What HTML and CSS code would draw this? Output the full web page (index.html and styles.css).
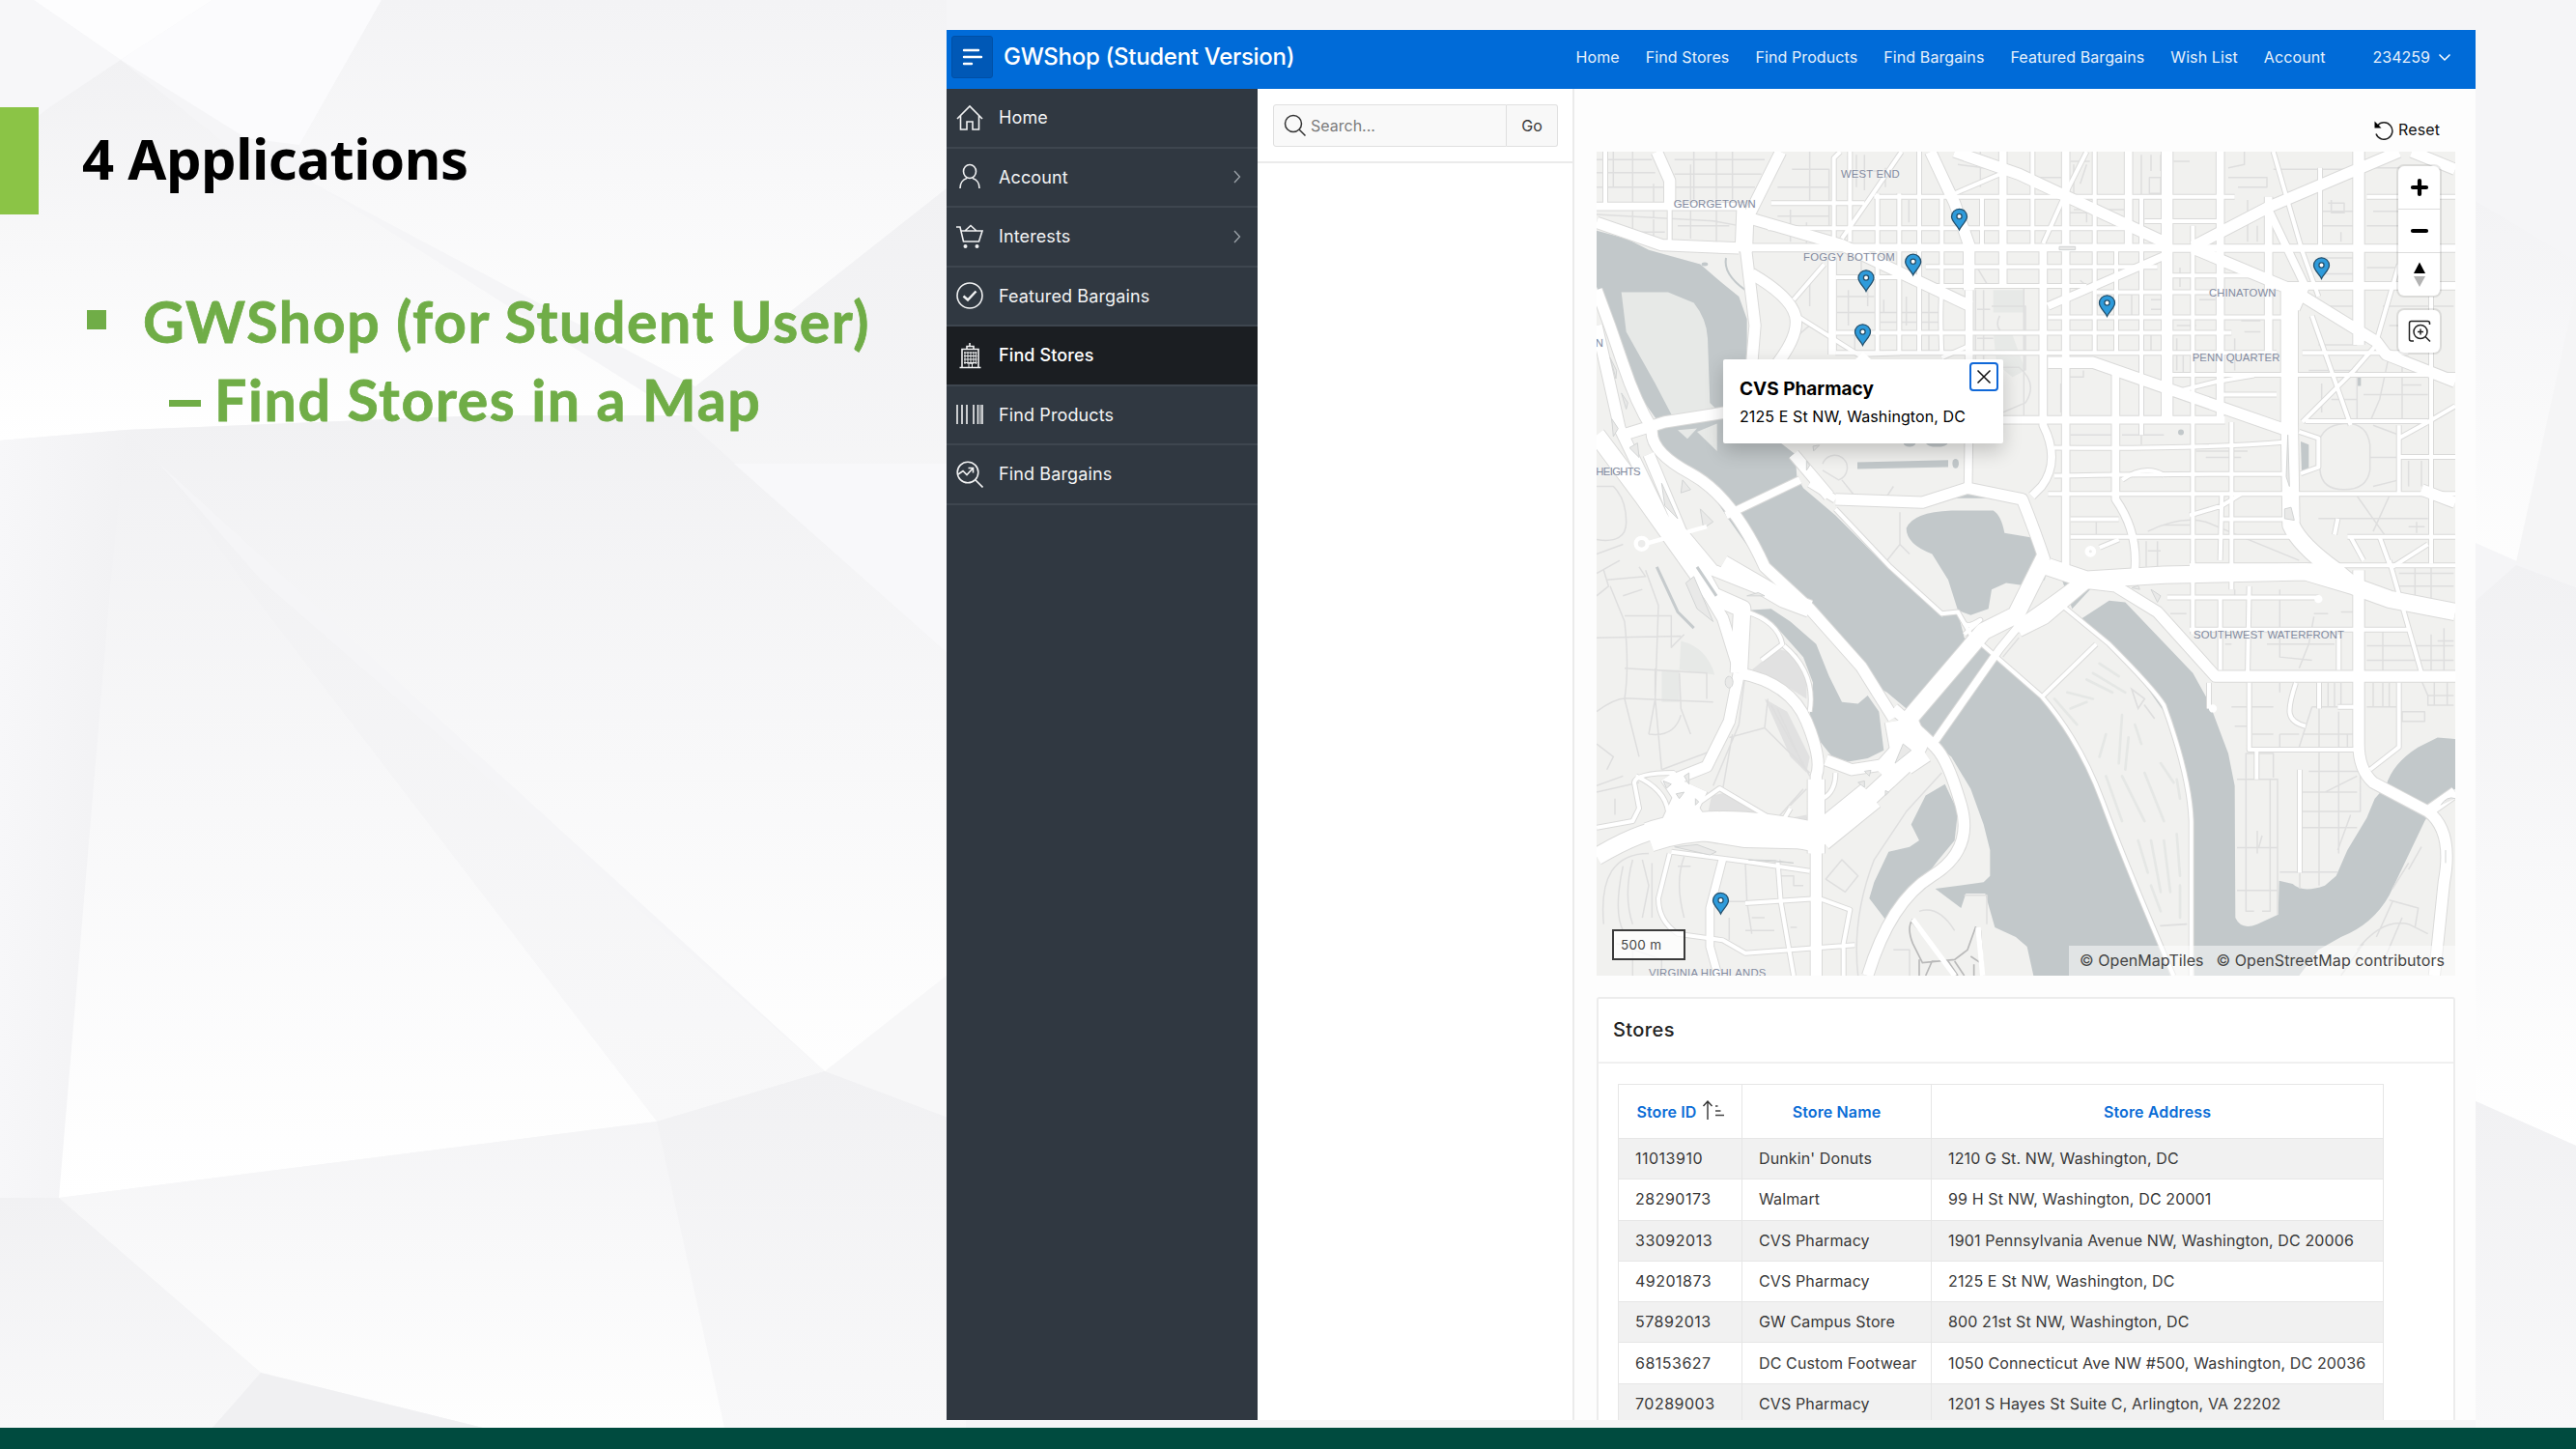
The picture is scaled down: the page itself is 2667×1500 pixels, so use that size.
FILE: index.html
```html
<!DOCTYPE html>
<html lang="en">
<head>
<meta charset="utf-8">
<title>4 Applications</title>
<link rel="stylesheet" href="styles.css">
</head>
<body>
<main class="slide">
  <svg class="backdrop" viewBox="0 0 2667 1478" preserveAspectRatio="none" aria-hidden="true">
    <defs>
      <linearGradient id="fall" x1="0" y1="0" x2="0" y2="1"><stop offset="0" stop-color="#f1f1f3"/><stop offset="1" stop-color="#fff"/></linearGradient>
      <linearGradient id="soft" x1="0" y1="0" x2="0" y2="1"><stop offset="0" stop-color="#f1f1f3"/><stop offset="1" stop-color="#f8f8f9"/></linearGradient>
      <linearGradient id="sky" x1="0" y1="0" x2="0" y2="1"><stop offset="0" stop-color="#f3f3f5"/><stop offset="1" stop-color="#fefefe"/></linearGradient>
      <linearGradient id="side" x1="0" y1="0" x2="1" y2="0"><stop offset="0" stop-color="#f7f7f9"/><stop offset="1" stop-color="#f0f0f2"/></linearGradient>
    </defs>
    <rect width="2667" height="1478" fill="#f5f5f7"/>
    <path d="M0 0H35L125 62 50 112 0 230Z" fill="#f7f7f9"/>
    <path d="M35 0H220L125 62Z" fill="#fdfdfe"/>
    <path d="M220 0H395L310 150 255 143 125 62Z" fill="#fbfbfd"/>
    <path d="M395 0H980V195L720 400 325 190 310 150Z" fill="url(#sky)"/>
    <path d="M125 62 285 190H325L705 430 500 430 130 445 0 456V150L50 112Z" fill="url(#fall)"/>
    <path d="M980 195V675L760 480 705 430 720 400Z" fill="url(#soft)"/>
    <path d="M0 456 130 445 165 480 115 600 61 1240H0Z" fill="url(#side)"/>
    <path d="M130 445 500 430H705L980 675V1157L854 1109 165 480Z" fill="url(#fall)"/>
    <path d="M760 480 980 675V480Z" fill="#f8f8fa"/>
    <path d="M980 1010V1157L854 1109Z" fill="#f7f7f8"/>
    <path d="M130 445 165 480 270 600 854 1109 680 1161 250 640Z" fill="url(#soft)"/>
    <path d="M130 445 165 480 250 600 680 1161 61 1240 115 600Z" fill="url(#fall)"/>
    <path d="M61 1240 680 1161 854 1109 1000 1164V1478H500L270 1421Z" fill="url(#sky)"/>
    <path d="M680 1161 854 1109 1000 1164V1478H750Z" fill="url(#soft)"/>
    <path d="M0 1240H61L270 1421 220 1478H0Z" fill="url(#soft)"/>
    <path d="M270 1421 500 1478H220Z" fill="#f0f0f2"/>
    <path d="M2563 208 2667 270V608L2563 562Z" fill="url(#sky)"/>
    <path d="M2667 300 2605 582 2667 608Z" fill="#f5f5f6"/>
    <path d="M2563 622 2605 585 2667 608V1186L2563 1140Z" fill="url(#fall)"/>
    <path d="M2563 1140 2667 1186V1478H2563Z" fill="url(#soft)"/>
  </svg>

  <section class="lesson">
    <header class="lesson-head"><span class="accent"></span><h1>4 Applications</h1></header>
    <ul class="topics">
      <li><span class="square"></span><span class="topic-text">GWShop (for Student User)</span></li>
      <li class="sub"><span class="dash"></span><span class="sub-text">Find Stores in a Map</span></li>
    </ul>
  </section>

  <section class="app">
    <header class="topbar">
      <button class="burger" aria-label="Menu"><svg width="22" height="18" viewBox="0 0 22 18"><path d="M2 2H17M2 9H20M2 16H10" stroke="#fff" stroke-width="2.4" stroke-linecap="round"/></svg></button>
      <span class="brand">GWShop (Student Version)</span>
      <nav class="links">
        <a>Home</a><a>Find Stores</a><a>Find Products</a><a>Find Bargains</a><a>Featured Bargains</a><a>Wish List</a><a>Account</a>
      </nav>
      <span class="user">234259<svg width="14" height="9" viewBox="0 0 14 9"><path d="M1.5 1.5 7 7 12.500 1.500" fill="none" stroke="#fff" stroke-width="1.500"/></svg></span>
    </header>

    <div class="body">
      <nav class="sidebar">
        <a class="item"><svg class="ico" viewBox="0 0 28 28"><path d="M1 15 14 2 27 15M4.500 12V26H11V18H17V26H23.500V12"/></svg>Home</a>
        <a class="item"><svg class="ico" viewBox="0 0 28 28"><ellipse cx="14" cy="8.500" rx="6.500" ry="7"/><path d="M11 15.500C6 17.500 4 20 4 26M17 15.500C22 17.500 24 20 24 26"/></svg>Account<svg class="more" viewBox="0 0 8 14"><path d="M1 1 6.500 7 1 13"/></svg></a>
        <a class="item"><svg class="ico" viewBox="0 0 28 28"><path d="M0 4H4L7.500 19H23.500L27 8H5M9 8 15 2.500 21 8"/><circle class="dot" cx="9.500" cy="24" r="2"/><circle class="dot" cx="21.500" cy="24" r="2"/></svg>Interests<svg class="more" viewBox="0 0 8 14"><path d="M1 1 6.500 7 1 13"/></svg></a>
        <a class="item"><svg class="ico" viewBox="0 0 28 28"><circle cx="14" cy="14" r="13"/><path class="bold" d="M7.500 14.500 12 18.500 20.500 9.500"/></svg>Featured Bargains</a>
        <a class="item current"><svg class="ico" viewBox="0 0 28 28"><path d="M14 1V4M11 7V4.500H18V7M6 26V7.500H23V26M3.500 26.500H25.500"/><path class="fine" d="M9 10V23M12 10V23M15 10V23M18 10V23M20.500 10V23M8 11H21.500M8 14.500H21.500M8 18H21.500M8 21.500H21.500M13 26V22H16.500V26"/></svg>Find Stores</a>
        <a class="item"><svg class="ico" viewBox="0 0 28 28"><path d="M1 4V24M6 4V24M11 4V24M18 4V24M22.500 4V24M27 4V24"/><path class="fine" d="M25 4V24"/></svg>Find Products</a>
        <a class="item"><svg class="ico" viewBox="0 0 28 28"><circle cx="12" cy="12" r="10.800"/><path d="M19.500 19.500 27.500 27.500M2 14 7 10.500 11 14.500 17 8M12.500 7.500H17.500V12.500"/></svg>Find Bargains</a>
      </nav>

      <aside class="facets">
        <div class="searchbar">
          <label class="search"><svg width="24" height="24" viewBox="0 0 24 24"><circle cx="10" cy="10" r="8.500"/><path d="M16 16 22.500 22.500"/></svg><span>Search...</span></label>
          <button class="go">Go</button>
        </div>
      </aside>

      <div class="content">
        <div class="toolbar"><button class="reset"><svg width="20" height="21" viewBox="0 0 20 21"><path d="M3.500 6A8.700 8.700 0 1 1 2 14.500" fill="none" stroke="#222" stroke-width="1.500"/><path d="M.5 1.500V8.500H7.500Z" fill="#000"/></svg>Reset</button></div>

        <div class="map">
          <svg class="tiles" viewBox="38 20 2667 2560" preserveAspectRatio="none">
            <defs>
              <g id="roads">
                <g class="w12">
                  <path d="M65 20V180M265 130V300M775 300V40L795 20M825 20V300M910 150V650M978 150V650M1040 20V650M1110 160V450Q1104 520 1110 650M1235 160V310M1392 20V310M1585 20V650M1652 320V650M1730 160V900M1810 160V650M1890 250V1320M2010 860V1380M2285 70V320M2630 470V1300M2530 870V1083"/>
                  <path d="M900 160H2020M2430 160H2705M580 180H870M570 258H1690M1740 236H1970M1060 378H1780M780 410H975M1800 405H2130M1090 437H1560M1590 457H1990M1440 535H2170M780 583H2010M780 645H2150M2230 645H2560M1800 713H2705M1980 775H2150M2240 857H2620M1460 940Q1900 945 2180 922M2530 968H2705M1460 1027Q1900 1020 2180 1022M1440 1083H2705M1510 1162H1660M1980 1162H2220M1510 1217H2230M2370 1217H2705M1880 1305H2705"/>
                  <path d="M985 20 890 160 800 290M1560 20 1490 160 1425 305M1150 150 1290 90M650 480 745 370M660 530 850 650 980 645M1110 660 1190 625M2140 20 2230 330 2280 470M2530 370 2460 610M2230 860 2390 700 2460 620M2260 530 2380 870M1820 770 1960 735 2080 715M2530 910 2620 860 2705 810M1880 1150 1980 1120 2040 1083M1975 1290 1980 1083M2340 1160 2330 1210M2470 1217 2500 1300M1600 1250 1660 1225M1670 1040Q1740 990 1800 1025M2380 1217 2420 1290M2510 1310 2620 1240M2225 1020 2280 1000V910L2220 890"/>
                  <path d="M780 1130 950 1310 1110 1455 1160 1450 1200 1520 1420 1712Q1540 1850 1610 2040T1830 2580"/>
                  <path d="M1460 1410 1630 1550Q1770 1690 1800 1740Q1880 1960 1885 2100V2580M1420 1715 1590 1550"/>
                  <path d="M1810 1405H2280M1880 1505H2560M1890 1290V1520M2065 1370 2060 1650M1975 1400V1630M2530 1670V1870L2440 1940M2500 1290 2600 1640M2065 1670V1878H2400M2088 1880V1970M1940 1670V1750M2210 1670C2180 1760 2180 1790 2240 1805M2282 1670V1750M2340 1745H2400M2222 1940V2260M2343 1520V1630"/>
                  <path d="M265 2200 230 2340Q230 2410 290 2450L430 2470 500 2510 840 2485M600 2220 610 2350 650 2580M500 2355 730 2340 825 2375 805 2480V2580M270 2195 500 2225 700 2255M360 2040 420 1998 610 2110 640 2060M160 1960Q250 2000 260 2070M38 2120 150 2100 170 2060 155 1980Q160 1950 280 1950M505 1450Q600 1480 615 1550L550 1600M620 1555Q720 1640 700 1760M780 1950Q780 2010 740 2030M1180 1485Q1190 1500 1230 1475L1180 1520"/>
                </g>
                <g class="w22">
                  <path d="M38 190H500M770 350V650M1300 20V440M1195 450V850L1192 1060M1495 20V1320M1690 20V330M2125 160V640M440 318H1800M1800 320H2705M2130 437H2705M1650 700V1100Q1720 1200 1710 1320M1425 320V870Q1480 980 1420 1060L1390 1090M1975 20V850M1190 853H1990"/>
                  <path d="M440 1150 670 1040M1440 500 1820 335M2120 190 2240 440 2210 510M700 1050 780 1100M430 2215 390 2370 390 2490 415 2580M1090 1850 1290 1565 1360 1480"/>
                </g>
                <g class="w30">
                  <path d="M225 20 265 110V185M610 20 510 220M38 240 240 310 480 320M490 220 800 310 1200 500M1075 20 1150 180 1195 310V450M1150 20 1350 90 1820 310M1890 320 2200 450 2460 610 2490 650 2705 735M1890 315 2130 190 2530 20M1810 20V860M1440 675H1580L2180 885M2405 20V620M2570 20 2705 75M2600 1070 2705 1110"/>
                  <path d="M38 450Q80 560 120 680T210 880Q200 950 330 1020T560 1310L700 1440 860 1620 960 1780M120 900 250 860 440 830M780 1100 1050 1110 1190 1065 1360 1100Q1400 1200 1430 1290M500 310 530 560 520 680M520 400Q640 470 655 530T590 690M650 960 760 1090"/>
                  <path d="M1340 1500Q1500 1390 1560 1340M1350 1510 1430 1470 1560 1360 1650 1370 1780 1450 1960 1650H2705M2405 1320V1860Q2405 1940 2450 1980L2620 2070Q2700 2130 2670 2290L2640 2580M2620 2070 2705 2010"/>
                  <path d="M38 560 110 880 240 1150 430 1470 480 1630M200 960 300 1200 420 1420 480 1440M300 1200 400 1320 600 1400M480 1640Q640 1670 690 1790T720 1960V2580M480 1640 450 1790 380 1930 280 1970M960 1750Q1050 1830 1090 1870T1170 2050T1080 2270T880 2580M750 1910 830 1940 960 1920"/>
                </g>
                <g class="w46">
                  <path d="M500 200 495 330M2190 430V860L2195 1180Q2220 1240 2330 1320L2390 1370 2500 1410 2705 1450M1440 1310 1560 1350 1800 1335 2240 1325 2390 1370M1430 1280 1340 1460 1240 1510 1010 1780M38 900 180 1090 400 1400 490 1440 480 1640M430 1300 620 1410 700 1440"/>
                  <path d="M38 2210Q190 2120 280 2120L500 2155 720 2160 850 2060 990 1930 1040 1850M260 1960 360 2110M960 1790 980 1900M720 1970 720 2200M1000 1930 1060 1890"/>
                </g>
                <path class="w80" d="M200 2150Q400 2080 720 2150M280 2120 340 1990M730 2150 890 2020M990 1790 1020 1860 930 1960"/>
              </g>
              <path id="pin-shape" d="M9 22.500C7 18 1 13.500 1 8.800A8 8 0 0 1 17 8.800C17 13.500 11 18 9 22.500Z"/>
            </defs>
            <rect x="38" y="20" width="2667" height="2560" fill="#f1f1ef"/>
            <g class="water">
              <path d="M38 265 130 290 200 325 360 370 430 430 480 470 505 540V840L590 910 655 960 660 1030 680 1065 780 1150 950 1320 1110 1465 1160 1450 1180 1530 1240 1565 1420 1715Q1530 1850 1610 2040T1820 2580H1395L1375 2490 1340 2460 1275 2430 1245 2325H1185L1170 2370 1090 2310 1240 2290 1260 2270V2190L1240 2110 1200 2000 1140 1900 1090 1860 1000 1750 940 1700 905 1680 870 1610 700 1450 560 1320 450 1165 400 1090 320 1000 240 970 195 905 230 860 180 790 90 590 75 520 38 440Z"/>
              <path d="M505 1445 580 1440 640 1480 720 1550 760 1650 800 1730 850 1735 880 1710 915 1760 930 1880 880 1905 820 1915 770 1900 730 1850 700 1770 710 1670 680 1590 600 1500Z"/>
              <path d="M1120 1985 1060 2020 1015 2110 1040 2160 1010 2180 945 2195 900 2290 885 2340 935 2405 1000 2350 1100 2220 1150 2160 1160 2070Z"/>
              <path d="M1000 1190Q1020 1140 1140 1135H1270Q1295 1150 1305 1205L1385 1218 1440 1300 1430 1350 1380 1370 1310 1360 1265 1380 1255 1440 1200 1460 1160 1445 1130 1350 1080 1270Q1000 1240 1000 1190Z"/>
              <path d="M1135 1097Q1190 1060 1255 1097ZM848 985 1130 978V1000L848 1006ZM1480 1340 1585 1365 1515 1440ZM2225 920 2250 930V1010L2228 1015ZM2402 722H2412V748H2402Z"/>
              <path d="M1545 1470 1630 1415 1680 1420 1890 1640 1940 1730 2000 1890 2020 1990 2022 2400Q2040 2440 2090 2420L2155 2390 2158 2285 2200 2295Q2230 2325 2300 2300L2335 2270 2370 2190 2430 2090 2455 2030 2490 1990Q2510 1920 2590 1870L2650 1840 2705 1845V2000L2660 2020 2610 2100 2500 2330Q2450 2420 2350 2460L2280 2500 2220 2580H1895L1885 2390 1880 2040 1830 1830 1800 1760 1730 1660 1620 1540Z"/>
              <ellipse cx="1153" cy="989" rx="10" ry="15"/><ellipse cx="374" cy="370" rx="10" ry="6"/><ellipse cx="1010" cy="927" rx="18" ry="10"/><ellipse cx="1095" cy="925" rx="34" ry="12"/><circle cx="1853" cy="892" r="9"/>
              <path d="M440 350Q430 400 500 450" fill="none" stroke="#c2c8ca" stroke-width="6"/>
            </g>
            <g class="park">
              <path d="M115 457H260L340 490Q380 540 383 600L390 800 405 815 275 845 220 740 130 580ZM290 885 350 880 320 912ZM350 890 412 865V950Z"/>
              <path d="M300 1540Q380 1560 405 1645L295 1630ZM240 1630H295V1730H240ZM1270 450H1365V520H1270ZM1270 580 1330 590 1370 700 1330 720 1280 680Z"/>
              <path class="lot" d="M520 1630 600 1565 660 1580 690 1640V1720L610 1670ZM395 2020 450 2010 620 2120 600 2145 460 2120 385 2070ZM640 2090 690 2080 700 2120 640 2140ZM560 1720 630 1760 700 1900 690 1950 640 1900Z"/>
            </g>
            <g class="lanes">
              <path d="M90 20V130M150 20V290M215 120V300M340 20V170M410 20V300M460 20V200M330 60V290M38 45H210M38 85H220M38 130H260M280 45H560M280 90H550M280 130H530M70 270H250M290 250H450M38 215 400 235 480 250M645 75H760V250M600 130H760M700 20V180M640 200V300M690 240V310M600 220H760M845 30V130M870 30V140M935 70V130M845 80H930M1008 170V240M700 430V500M640 610 700 560M820 450V560M860 340V400M880 420V500M930 480V520M1000 470V560M1070 450V640M785 470H900M785 520H1100M920 550H1100M840 590V650M1220 380 1250 430M1230 20V130M1160 60 1280 75M1350 100H1500"/>
              <path d="M1215 450V850M1240 450V700M1265 500H1370V700M1365 440V850M1220 510H1260M1220 600H1270M1240 690H1350Q1410 740 1370 800L1300 830M1290 530Q1270 570 1310 590M1200 865H1420M740 990A40 40 0 0 1 800 970 40 40 0 0 1 790 1040L740 1010M800 1040 840 1090M940 1090 960 1060M980 1140V1240L940 1290M980 1240 1010 1270M38 1060H90Q130 1100 130 1170T38 1225M38 1270 120 1240"/>
              <path d="M1520 60V150M1560 60 1540 120M1730 30V160M1760 30V80M1790 30V80M1755 100H1790V150H1755ZM1830 50H1880M2000 70 2050 60V20M2000 100H2120V130H2030M2060 170V300M2090 250V300M2140 75H2400M2310 180H2360V210H2320V170M2280 205H2400M2290 250H2400M2350 270V300M2400 350H2280M2300 400H2400M2430 70H2580M2450 205H2570M2430 250H2570M2430 380H2530M2480 500H2700M2500 560H2620M2270 500H2390M2280 620H2400M1510 50H1570M1520 200H1570M1500 210H1560V240M1590 200H1700M1540 420 1600 470M1700 460V530M1760 480H1800M1760 510H1800M1760 590V640M1850 380V440M1840 560H1900M1910 480H1960M2000 370 2100 400M2040 545H2100M2050 580H2100M2020 600V700M1840 600V700M1860 650V710M1500 720H1550V700M1480 740V830M1510 900H1640M1670 900H1800M1730 850V930"/>
              <path d="M2250 700H2400V850M2290 740V830M2320 790H2400M2420 775H2620M2500 650 2470 790 2440 860M2540 640V850M2540 745H2600M2280 930Q2290 870 2360 865T2440 930V1010Q2430 1070 2360 1070T2285 1010ZM2440 970H2530M2450 870 2530 900M2450 1060 2530 1040M2560 980V1060M2600 980V1060M2280 1160H2620M2400 1090 2490 1217M2500 1090 2450 1200M2560 1185H2610M2585 1170V1205M1590 1170V1210M1720 1230V1310M1745 1230V1310M1780 1230V1310M1800 1180H1880M1750 1260H1790M1900 950H2060M1930 970H2040M1750 1200Q1850 1150 1930 1170L2050 1220 2220 1290M2530 1330H2700M2530 1370H2700M2580 1300V1420M2630 1300V1420"/>
              <path d="M2160 1380V1590L2260 1600M2020 1380V1400M1820 1455H1870M1990 1550H2010M2120 1550H2330M2266 1465 2250 1550 2220 1625M2266 1455H2310M2350 1450H2400M2430 1555H2700M2430 1600H2700M2480 1510V1640M2630 1520V1640M2670 1500V1640M2650 1540H2700M2010 1745H2140M2020 1805H2060M2075 1830H2140M2160 1830H2220M2160 1830V1870M2160 1700V1670M2430 1745H2530M2450 1670V1745M2480 1670V1745M2500 1670V1745M2310 1670V1745M2330 1670V1745M2350 1670V1745M2260 1745H2400M2282 1745V2300M2343 1760V2200M2220 1870 2260 1745M2230 1830H2390M2370 1830V1870M2250 1945H2410V2070H2230M2230 2010H2400M2300 2010 2400 1960M2230 2120H2400M2380 2080 2340 2190M2160 2258H2340M2222 2260V2310M2540 1760H2610V1790H2540ZM2590 1640 2620 1710V1740H2700M2640 1640V1740M2680 1640V1740M2620 1710H2700"/>
              <path d="M2027 1970H2153V2390M2055 1970V2380H2080M2130 1970V2380H2105M2027 2182H2153M2027 2315H2153M2055 2000V1890H2140V1965M2090 2130V2200M2105 2145 2095 2180M2560 2230 2510 2310M2500 2345 2590 2370 2580 2430M2400 2500Q2480 2400 2560 2420L2620 2450M2510 2350 2460 2460M2350 2580 2420 2480M2540 2400 2480 2540M2600 2180 2560 2250"/>
              <path d="M38 1330 110 1290M38 1400 75 1370 60 1320M80 1370 125 1480Q140 1620 125 1720L170 1900M70 1350 190 1340 170 1310M120 1400 180 1380M190 1320 230 1430 220 1720 240 1940M125 1462H270M38 1530 300 1525M125 1625 380 1640V1720M220 1625V1710M125 1718 400 1730M38 1760Q90 1720 130 1718M310 1520 270 1560V1460M295 1640 300 1750 330 1830M220 1720 200 1830M200 1830Q280 1840 300 1770M38 1860 90 1900 70 1940M240 1940 400 1880M38 1990 120 1960M95 2030V2080M38 2010 170 1980M500 1640 480 1800 400 1990M450 1840 560 1810 700 1950M460 1830 430 2000M560 1810 570 1720M580 1740 700 1960M600 1750 680 1930M600 2090 680 2000M640 2050 690 2000"/>
              <path d="M60 2420Q40 2200 200 2200M120 2240Q90 2380 120 2440M150 2220Q120 2330 150 2420M180 2220 200 2300 180 2400M210 2230V2400M310 2210Q280 2290 310 2400M330 2240H290M500 2230 505 2350 520 2450M520 2400H560M440 2350 520 2350M610 2270H650V2300H680M640 2430H660M750 2280 800 2220 850 2270 810 2320ZM850 2580Q830 2400 900 2220L1000 2070 1110 1950M1040 2380Q1100 2360 1150 2440M960 2500H1010V2580M1180 2330H1250V2420M1300 1590 1350 1530M100 2480 240 2530V2580M150 2500V2580M450 2400V2470M500 2440H590"/>
            </g>
            <g class="greens">
              <path d="M1580 1640 1680 1700M1560 1660 1640 1700M1500 1700 1580 1720M1460 1720 1530 1800M1600 1610 1660 1650M1670 1770 1660 1920M1710 1800 1730 1860M1620 1830 1600 1900M1690 1840 1680 1940M1620 1960 1670 2100M1670 1960 1740 2100M1740 1950 1800 2100M1790 1920 1830 1980M1720 2160 1750 2260M1760 2160 1790 2320M1800 2160 1820 2320M1840 2140 1850 2270M1760 2300 1790 2380M1850 2300V2400M1840 1970 1850 2030M1510 1750 1560 1730"/>
              <path class="dark" d="M1700 1690 1740 1720 1720 1750ZM1740 1740 1770 1780M1790 2425 1870 2420"/>
            </g>
            <use href="#roads" class="edge"/>
            <use href="#roads" class="fill"/>
            <g class="isles">
              <path d="M80 660 100 700 98 725ZM115 770 135 800 130 820ZM85 850 105 880 90 905ZM140 940 165 925 170 970ZM305 1040 330 1070 300 1080ZM690 980 700 995 690 1010ZM710 935 730 932 712 950ZM240 1050 290 1160 250 1120ZM360 1130 400 1170 370 1190ZM505 1400 540 1390 560 1400ZM315 1360 340 1340 400 1480 350 1440ZM450 1650A12 18 0 1 1 449 1650M310 1960 325 1950 325 1985ZM245 1975 270 1985 255 1998ZM285 2015 310 2010 295 2030ZM345 2030 355 2040 345 2050ZM280 2180 350 2173 410 2195 390 2205ZM510 2220 590 2222 650 2230ZM990 1860 1015 1880 965 1920ZM870 1945 890 1942 885 1960ZM850 1980 870 1975 870 1995ZM935 2005 945 2010 935 2020ZM1475 315H1525V325H1475ZM1700 1375 1720 1368 1725 1380ZM1760 1380 1790 1400 1780 1420ZM2185 900 2190 1060 2180 1030ZM2175 1130 2195 1125 2205 1165 2175 1160ZM2660 2050Q2680 2020 2705 2030M2675 2190V2230"/>
              <path class="creek" d="M225 1310 290 1450 340 1500M350 1310 410 1400"/>
            </g>
            <g class="rings"><path d="M190 1238 380 1185"/><circle cx="178" cy="1238" r="18"/><circle cx="1572" cy="1262" r="11"/><circle cx="2280" cy="1410" r="6"/><circle cx="1952" cy="1750" r="6"/></g>
            <g class="runways">
              <path class="taxi" d="M1020 2405Q1000 2430 1020 2480L1050 2540 1150 2530 1190 2500 1215 2430 1230 2440 1240 2580M1040 2580V2530M1060 2580 1080 2535H1130L1160 2580M1180 2580 1150 2535M1200 2520 1230 2540M1210 2580V2545M1015 2410 1160 2580"/>
              <path class="strip" d="M1020 2405 1150 2580M1223 2430 1237 2580"/>
            </g>
            <g class="places">
              <text x="277" y="195" textLength="255">GEORGETOWN</text>
              <text x="797" y="100" textLength="182">WEST END</text>
              <text x="680" y="358" textLength="284">FOGGY BOTTOM</text>
              <text x="1940" y="471" textLength="208">CHINATOWN</text>
              <text x="1888" y="670" textLength="272">PENN QUARTER</text>
              <text x="1892" y="1534" textLength="468">SOUTHWEST WATERFRONT</text>
              <text x="36" y="1024" textLength="139">HEIGHTS</text>
              <text x="34" y="625">N</text>
              <text x="200" y="2584" textLength="364">VIRGINIA HIGHLANDS</text>
            </g>
          </svg>

          <svg class="pins" viewBox="0 0 889 853">
            <g transform="translate(366.500 58.500)"><use href="#pin-shape"/><circle cx="9" cy="8.500" r="2.600"/></g>
            <g transform="translate(318.700 105.300)"><use href="#pin-shape"/><circle cx="9" cy="8.500" r="2.600"/></g>
            <g transform="translate(270 122)"><use href="#pin-shape"/><circle cx="9" cy="8.500" r="2.600"/></g>
            <g transform="translate(266.500 178)"><use href="#pin-shape"/><circle cx="9" cy="8.500" r="2.600"/></g>
            <g transform="translate(519.500 148)"><use href="#pin-shape"/><circle cx="9" cy="8.500" r="2.600"/></g>
            <g transform="translate(741.500 109)"><use href="#pin-shape"/><circle cx="9" cy="8.500" r="2.600"/></g>
            <g transform="translate(119.500 766.500)"><use href="#pin-shape"/><circle cx="9" cy="8.500" r="2.600"/></g>
          </svg>

          <div class="popup">
            <strong>CVS Pharmacy</strong>
            <span>2125 E St NW, Washington, DC</span>
            <button class="close" aria-label="Close"><svg width="16" height="16" viewBox="0 0 16 16"><path d="M1.500 1.500 14.500 14.500M14.500 1.500 1.500 14.500" stroke="#111" stroke-width="1.500"/></svg></button>
          </div>

          <div class="controls">
            <div class="group">
              <button aria-label="Zoom in"><svg width="20" height="20" viewBox="0 0 20 20"><path d="M10 3V17M3 10H17" stroke="#000" stroke-width="4.200" stroke-linecap="round"/></svg></button>
              <button aria-label="Zoom out"><svg width="20" height="20" viewBox="0 0 20 20"><path d="M3 10H17" stroke="#000" stroke-width="4.200" stroke-linecap="round"/></svg></button>
              <button aria-label="Reset bearing"><svg width="14" height="28" viewBox="0 0 14 28"><path d="M7 1.500 13 13H1Z" fill="#000"/><path d="M7 27 13 16H1Z" fill="#b3b3b3"/></svg></button>
            </div>
            <div class="group">
              <button aria-label="Zoom to area"><svg width="24" height="24" viewBox="0 0 24 24" fill="none" stroke="#222" stroke-width="1.500"><path d="M22.500 5V3.500Q22.500 1.500 20.500 1.500H3.500Q1.500 1.500 1.500 3.500V20Q1.500 22 3.500 22H6"/><circle cx="13" cy="12.500" r="7"/><path d="M18 17.500 23 22.500M13 9.500V15.500M10 12.500H16"/></svg></button>
            </div>
          </div>

          <div class="scale">500 m</div>
          <div class="credits"><span>© OpenMapTiles</span><span>© OpenStreetMap contributors</span></div>
        </div>

        <section class="stores">
          <h2>Stores</h2>
          <table>
            <colgroup><col class="c-id"><col class="c-name"><col class="c-addr"></colgroup>
            <thead><tr><th class="sorted">Store ID<svg width="23" height="22" viewBox="0 0 23 22"><path d="M6 21V2M1.500 7 6 2 10.500 7" fill="none" stroke="#333" stroke-width="1.400"/><path d="M14 7H16.500M14 12H19.500M14 16.500H23" stroke="#444" stroke-width="1.400"/></svg></th><th>Store Name</th><th>Store Address</th></tr></thead>
            <tbody>
              <tr><td>11013910</td><td>Dunkin' Donuts</td><td>1210 G St. NW, Washington, DC</td></tr>
              <tr><td>28290173</td><td>Walmart</td><td>99 H St NW, Washington, DC 20001</td></tr>
              <tr><td>33092013</td><td>CVS Pharmacy</td><td>1901 Pennsylvania Avenue NW, Washington, DC 20006</td></tr>
              <tr><td>49201873</td><td>CVS Pharmacy</td><td>2125 E St NW, Washington, DC</td></tr>
              <tr><td>57892013</td><td>GW Campus Store</td><td>800 21st St NW, Washington, DC</td></tr>
              <tr><td>68153627</td><td>DC Custom Footwear</td><td>1050 Connecticut Ave NW #500, Washington, DC 20036</td></tr>
              <tr><td>70289003</td><td>CVS Pharmacy</td><td>1201 S Hayes St Suite C, Arlington, VA 22202</td></tr>
            </tbody>
          </table>
        </section>
      </div>
    </div>
  </section>
</main>
<footer class="footer-bar"></footer>
</body>
</html>
```
FILE: styles.css
```css
* { box-sizing: border-box; }
body { margin: 0; width: 2667px; height: 1500px; overflow: hidden; font-family: Inter, Roboto, sans-serif; color: #222; }
button { border: 0; background: none; padding: 0; font: inherit; color: inherit; display: flex; align-items: center; justify-content: center; }
svg { flex: none; display: block; }

.slide { position: relative; display: grid; grid-template-columns: 980px 1583px; height: 1478px; padding: 31px 0 8px; }
.backdrop { position: absolute; inset: 0; width: 2667px; height: 1478px; z-index: -1; }
.footer-bar { height: 22px; background: #004b3f; }

.lesson-head { display: flex; align-items: center; gap: 45px; margin-top: 80px; height: 111px; }
.accent { width: 40px; height: 111px; background: #8bc446; }
h1 { margin: 0; padding-bottom: 5px; font: 700 58px/1 "Noto Sans", "Open Sans", sans-serif; color: #000; white-space: nowrap; letter-spacing: -0.5px; }
.topics { list-style: none; margin: 70px 0 0; padding: 0; font: 700 59px/81px Lato, sans-serif; letter-spacing: 1.6px; color: #70ad47; -webkit-text-stroke: 0.8px #70ad47; white-space: nowrap; }
.topics li { display: flex; align-items: center; height: 81px; padding-left: 90px; }
.square { width: 20px; height: 20px; background: #70ad47; margin: 0 38px 4px 0; }
.topics .sub { padding-left: 175px; }
.dash { width: 33px; height: 7px; background: #70ad47; margin: 8px 14px 0 0; }

.app { display: flex; flex-direction: column; height: 1439px; overflow: hidden; background: #fdfdfd; }
.topbar { display: flex; align-items: center; flex: none; height: 61px; padding: 0 25px 5px 5px; background: #006bd8; color: #fff; }
.burger { width: 43px; height: 44px; border-radius: 3px; background: #0058b6; border: 1px solid #004fa5; }
.brand { margin-left: 11px; padding-bottom: 1px; font-size: 24px; font-weight: 500; letter-spacing: -0.3px; white-space: nowrap; }
.links { display: flex; gap: 27px; margin-left: auto; font-size: 16px; letter-spacing: 0.1px; color: #e6f0fb; }
.user { display: flex; align-items: center; gap: 8px; margin-left: 49px; font-size: 16px; color: #e6f0fb; }

.body { display: grid; grid-template-columns: 322px 328px 933px; flex: 1; min-height: 0; }
.sidebar { background: #303841; }
.item { display: flex; align-items: center; height: 61.500px; padding: 0 17px 0 10px; border-bottom: 2px solid #3e464f; color: #f3f4f5; font-size: 18px; letter-spacing: 0.12px; }
.item.current { background: #1b1e22; font-weight: 500; color: #fff; }
.ico { width: 28px; height: 28px; margin-right: 16px; fill: none; stroke: #f0f1f2; stroke-width: 1.600; }
.ico .dot { fill: #f0f1f2; stroke: none; }
.ico .bold { stroke-width: 2.500; }
.ico .fine { stroke-width: 1; }
.more { width: 8px; height: 14px; margin-left: auto; fill: none; stroke: #99a0a6; stroke-width: 1.400; }

.facets { background: #fff; border-right: 2px solid #ebebeb; }
.searchbar { display: flex; height: 77px; padding: 16px 15px 16px 16px; border-bottom: 2px solid #ebebeb; font-size: 16px; }
.search { display: flex; align-items: center; gap: 4px; width: 243px; height: 44px; padding-left: 10px; background: #f9f9f9; border: 1.500px solid #e0e0e0; border-radius: 3px 0 0 3px; color: #7b7b7b; }
.search svg { fill: none; stroke: #333; stroke-width: 1.500; }
.go { width: 53px; height: 44px; background: #f8f8f8; border: 1.500px solid #e0e0e0; border-left: 0; border-radius: 0 3px 3px 0; color: #383838; }

.content { display: flex; flex-direction: column; padding: 0 21px 0 23px; min-width: 0; overflow: hidden; }
.toolbar { display: flex; justify-content: flex-end; align-items: center; flex: none; height: 65px; padding: 19px 16px 0 0; }
.reset { gap: 5px; font-size: 16px; letter-spacing: 0.1px; color: #111; }

.map { position: relative; flex: none; width: 889px; height: 853px; overflow: hidden; }
.tiles, .pins { position: absolute; inset: 0; width: 889px; height: 853px; }
.water { fill: #c2c8ca; }
.park { fill: #e7e9e7; }
.park .lot { fill: #e1e1e1; }
.lanes { fill: none; stroke: #dedede; stroke-width: 4.500; stroke-linejoin: round; }
.greens { fill: none; stroke: #e5e7e5; stroke-width: 8; stroke-linecap: round; }
.greens .dark { stroke: #dedede; stroke-width: 5; }
#roads { fill: none; stroke-linejoin: round; stroke-linecap: butt; }
.edge { stroke: #dadad9; --rim: 6px; }
.fill { stroke: #fff; --rim: 0px; }
.w12 { stroke-width: calc(12px + var(--rim)); }
.w22 { stroke-width: calc(23px + var(--rim)); }
.w30 { stroke-width: calc(34px + var(--rim)); }
.w46 { stroke-width: calc(52px + var(--rim)); }
.w80 { stroke-width: calc(90px + var(--rim)); }
.isles { fill: #e9e9e8; stroke: #d2d4d4; stroke-width: 3; }
.isles .creek { fill: none; stroke: #c6cbcd; stroke-width: 9; }
.rings { fill: #ececeb; stroke: #fff; stroke-width: 13; }
.runways { fill: none; }
.taxi { stroke: #b9b9b9; stroke-width: 5; }
.strip { stroke: #fff; stroke-width: 16; }
.places { font: 34px "Liberation Sans", sans-serif; fill: #838ba0; stroke: #f4f4f4; stroke-width: 4; stroke-opacity: .5; paint-order: stroke; }
.pins { fill: #2e9bdb; stroke: #25506c; stroke-width: 1.300; }
.pins circle { fill: #fff; }

.popup { position: absolute; left: 131px; top: 215px; width: 290px; height: 87px; padding: 18px 17px; display: flex; flex-direction: column; background: #fff; border-radius: 2px; box-shadow: 0 8px 20px rgba(0,0,0,.2); color: #000; white-space: nowrap; }
.popup::before { content: ""; position: absolute; left: 137px; top: -8px; border: 8px solid transparent; border-top: 0; border-bottom-color: #fff; }
.popup strong { font-size: 19px; line-height: 26px; font-weight: 700; }
.popup span { font-size: 16px; line-height: 31px; letter-spacing: 0.1px; }
.close { position: absolute; right: 5px; top: 3px; width: 30px; height: 30px; border: 2px solid #1068d8; border-radius: 4px; }

.controls { position: absolute; right: 16px; top: 15px; display: flex; flex-direction: column; gap: 15px; }
.group { width: 43px; background: #fff; border-radius: 6px; box-shadow: 0 0 0 2px rgba(0,0,0,.09); }
.group button { width: 43px; height: 44px; }
.group button + button { height: 45px; border-top: 1.500px solid #ddd; }
.scale { position: absolute; left: 16px; bottom: 16px; width: 76px; height: 32px; padding-left: 7px; border: 2px solid #3b3b3b; background: rgba(255,255,255,.75); font-size: 13.500px; line-height: 28px; letter-spacing: 0.3px; color: #444; }
.credits { position: absolute; right: 0; bottom: 0; display: flex; justify-content: space-between; align-items: center; width: 400px; height: 31px; padding: 0 11px 2px; background: rgba(255,255,255,.5); color: #444; font-size: 16px; letter-spacing: 0.06px; white-space: nowrap; }

.stores { flex: none; height: 500px; margin-top: 22px; border: 2px solid #ececec; border-radius: 3px; background: #fff; }
h2 { margin: 0; height: 67px; padding-left: 15px; border-bottom: 2px solid #f0f0f0; font-size: 20px; font-weight: 500; letter-spacing: 0.4px; line-height: 64px; }
table { margin: 21px 0 0 20px; table-layout: fixed; width: 793px; border-collapse: collapse; font-size: 16px; letter-spacing: 0.12px; color: #383838; white-space: nowrap; }
.c-id { width: 128px; } .c-name { width: 196px; } .c-addr { width: 468px; }
th { height: 56px; padding: 0; border: 1.500px solid #e6e6e6; font-weight: 600; color: #0a6cd6; }
.sorted { padding-bottom: 3px; }
.sorted svg { display: inline-block; margin-left: 5px; vertical-align: -3px; }
td { height: 42.300px; padding: 0 0 1px 17px; border: 1.500px solid #e6e6e6; }
td:first-child { letter-spacing: 0.5px; }
tbody tr:nth-child(odd) { background: #f1f1f1; }
```
